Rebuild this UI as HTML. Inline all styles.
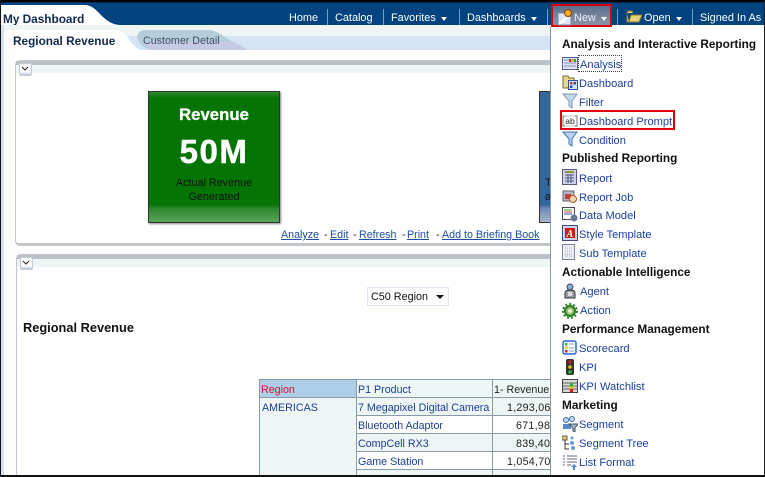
<!DOCTYPE html>
<html><head><meta charset="utf-8">
<style>
html,body{margin:0;padding:0;background:#fff}
#p{position:relative;width:765px;height:477px;overflow:hidden;background:#fff;font-family:"Liberation Sans",sans-serif;font-size:11px}
.a{position:absolute;white-space:nowrap}
.nav{color:#fff;top:11px;font-size:10.9px;line-height:14px}
.sep{position:absolute;top:9px;width:1px;height:16px;background:#7d9dbd}
.arr{display:inline-block;border-left:3.5px solid transparent;border-right:3.5px solid transparent;border-top:4px solid #fff;margin-left:5px;vertical-align:0}
.h{position:absolute;left:562px;font-weight:bold;font-size:11.8px;color:#111;white-space:nowrap;line-height:14px}
.m{position:absolute;left:579px;color:#1a3f9c;font-size:11.1px;white-space:nowrap;line-height:14px}
.ic{position:absolute;left:562px;width:16px;height:16px}
.l{position:absolute;color:#1c4fa0;text-decoration:underline;white-space:nowrap;font-size:10.7px;top:228px;line-height:14px}
.d{position:absolute;top:228px;color:#333;font-size:11px;line-height:14px}
.c{position:absolute;height:19px;line-height:19px;box-sizing:border-box;border:1px solid #8a9ba8;white-space:nowrap;overflow:hidden;font-size:10.7px;padding:1px 2px 0 1px;color:#1c3f94}
.n{letter-spacing:.25px}
.btn{position:absolute;width:11px;height:11px;background:linear-gradient(#fff 70%,#b8c6dc);border:1px solid #c2ccd8;border-radius:2px}
</style></head><body>
<div id="p">
<!-- header -->
<div class="a" style="left:0;top:0;width:765px;height:25px;background:#00437f"></div>
<div class="a" style="left:0;top:0;width:765px;height:2px;background:#000"></div>
<div class="a" style="left:0;top:2px;width:765px;height:1px;background:#0a2d55"></div>
<svg class="a" style="left:0;top:4px" width="125" height="22"><path d="M1 1H85C98 1 102 20 120 21V22H1Z" fill="#fff"/></svg>
<div class="a" style="left:3px;top:12px;font-weight:bold;font-size:11.8px;color:#10294f;line-height:14px">My Dashboard</div>
<div class="a nav" style="left:289px">Home</div><div class="sep" style="left:327px"></div>
<div class="a nav" style="left:335px">Catalog</div><div class="sep" style="left:383px"></div>
<div class="a nav" style="left:391px">Favorites<span class="arr"></span></div><div class="sep" style="left:459px"></div>
<div class="a nav" style="left:467px">Dashboards<span class="arr"></span></div><div class="sep" style="left:547px"></div>
<div class="a" style="left:551px;top:4px;width:61px;height:23px;box-sizing:border-box;border:2px solid #e00010;background:linear-gradient(#5a6f8e,#7c869c 60%,#8a93a8)"></div>
<svg class="a" style="left:556px;top:8px" width="18" height="18"><path d="M2 5H11L15 9V17H2Z" fill="#dfe6f4" stroke="#7a8aa8"/><path d="M3 16L14 7" stroke="#fff" stroke-width="2"/><circle cx="12" cy="5" r="3.5" fill="#f0b020" stroke="#a03010"/></svg>
<div class="a nav" style="left:574px;color:#eef">New<span class="arr"></span></div>
<div class="sep" style="left:617px"></div>
<svg class="a" style="left:626px;top:10px" width="17" height="14"><path d="M1 3V12H13L16 5H5L3 12" fill="#e6d47c" stroke="#8a7a30"/><path d="M1 3L2 1H6L7 3" fill="#e6d47c" stroke="#8a7a30"/></svg>
<div class="a nav" style="left:644px">Open<span class="arr"></span></div><div class="sep" style="left:692px"></div>
<div class="a nav" style="left:700px">Signed In As</div>

<!-- tab band -->
<div class="a" style="left:1px;top:25px;width:550px;height:11px;background:#eef6f5"></div>
<div class="a" style="left:1px;top:36px;width:550px;height:14px;background:#d4e4f5"></div>
<div class="a" style="left:1px;top:50px;width:550px;height:4px;background:#eef6f5"></div>
<div class="a" style="left:1px;top:25px;width:3px;height:450px;background:#d4e4f5"></div>
<svg class="a" style="left:4px;top:30px" width="245" height="24"><path d="M0 24V4Q0 0 5 0H112C124 0 125 16 137 20V24Z" fill="#fff"/><path d="M133 7Q134 0 142 0H205C216 0 226 14 245 20H151C140 20 135 14 133 7Z" fill="#b4cdd8"/><path d="M140 12L146 20H245L230 12Z" fill="#c6cae4"/></svg>
<div class="a" style="left:13px;top:34px;font-weight:bold;font-size:11.8px;color:#12294f;line-height:14px">Regional Revenue</div>
<div class="a" style="left:143px;top:34px;font-size:10.7px;color:#45506a;line-height:14px">Customer Detail</div>
<div class="a" style="left:4px;top:50px;width:547px;height:425px;background:#fff"></div>

<!-- panel 1 -->
<div class="a" style="left:15px;top:60px;width:540px;height:186px;box-sizing:border-box;border:1px solid #c2c6d0;border-right:0;border-bottom:3px solid #c2c6ca;border-radius:5px 0 0 5px;background:#fff"></div>
<div class="a" style="left:16px;top:61px;width:535px;height:4px;background:#bcc0c8"></div>
<div class="a" style="left:16px;top:65px;width:535px;height:8px;background:#eef6f5"></div>
<div class="btn" style="left:19px;top:63px"></div>
<svg class="a" style="left:20px;top:65px" width="10" height="8"><path d="M2 2L5 5L8 2" fill="none" stroke="#222"/></svg>

<!-- revenue tile -->
<div class="a" style="left:148px;top:91px;width:132px;height:132px;box-sizing:border-box;border:1px solid #333;background:linear-gradient(#2f8a2f,#047404 6px,#047404 113px,#2a862a 116px,#5aa55a);box-shadow:1px 1px 2px #888"></div>
<div class="a" style="left:148px;top:105px;width:132px;text-align:center;color:#fff;font-weight:bold;font-size:16.8px;line-height:20px;-webkit-text-stroke:.3px #fff">Revenue</div>
<div class="a" style="left:148px;top:133px;width:132px;text-align:center;color:#fff;font-weight:bold;font-size:33px;letter-spacing:1.5px;line-height:38px;-webkit-text-stroke:.5px #fff">50M</div>
<div class="a" style="left:148px;top:176px;width:132px;text-align:center;color:#111;font-size:10.8px;line-height:14px">Actual Revenue<br>Generated</div>

<!-- blue tile -->
<div class="a" style="left:539px;top:91px;width:12px;height:132px;box-sizing:border-box;border:1px solid #333;border-right:0;background:linear-gradient(#336699,#336699 113px,#6a88b4 116px,#a8b4cc)"></div>
<div class="a" style="left:545px;top:176px;color:#111;font-size:10.8px;line-height:14px;width:6px;overflow:hidden">T<br>a</div>

<!-- links -->
<a class="l" style="left:281px">Analyze</a><span class="d" style="left:324px">-</span>
<a class="l" style="left:330px">Edit</a><span class="d" style="left:353px">-</span>
<a class="l" style="left:359px">Refresh</a><span class="d" style="left:402px">-</span>
<a class="l" style="left:407px">Print</a><span class="d" style="left:436px">-</span>
<a class="l" style="left:442px">Add to Briefing Book</a>

<!-- panel 2 -->
<div class="a" style="left:16px;top:254px;width:540px;height:230px;box-sizing:border-box;border:1px solid #c2c6d0;border-right:0;border-radius:5px 0 0 0;background:#fff"></div>
<div class="a" style="left:17px;top:255px;width:534px;height:4px;background:#bcc0c8"></div>
<div class="a" style="left:17px;top:259px;width:534px;height:8px;background:#eef6f5"></div>
<div class="btn" style="left:20px;top:257px"></div>
<svg class="a" style="left:21px;top:259px" width="10" height="8"><path d="M2 2L5 5L8 2" fill="none" stroke="#222"/></svg>

<!-- select -->
<div class="a" style="left:367px;top:287px;width:82px;height:19px;box-sizing:border-box;border:1px solid #dde6f0;background:#fff;font-size:10.8px;line-height:19px;padding-left:3px;color:#111">C50 Region</div>
<div class="a" style="left:436px;top:295px;border-left:4px solid transparent;border-right:4px solid transparent;border-top:4px solid #111"></div>

<div class="a" style="left:23px;top:320px;font-weight:bold;font-size:12.8px;color:#111;line-height:16px">Regional Revenue</div>

<!-- table -->
<div class="c" style="left:259px;top:379px;width:98px;background:#aecde6;color:#e01030">Region</div>
<div class="c" style="left:259px;top:397px;width:98px;height:90px;background:#eef6f5;padding-left:2px">AMERICAS</div>
<div class="c" style="left:356px;top:379px;width:137px;background:#eef6f5">P1 Product</div>
<div class="c" style="left:492px;top:379px;width:60px;background:#eef6f5;color:#222">1- Revenue</div>
<div class="c" style="left:356px;top:397px;width:137px;background:#eef6f5">7 Megapixel Digital Camera</div>
<div class="c n" style="left:492px;top:397px;width:60px;background:#eef6f5;color:#222;padding:1px 0 0 14px">1,293,067</div>
<div class="c" style="left:356px;top:415px;width:137px;background:#fff">Bluetooth Adaptor</div>
<div class="c n" style="left:492px;top:415px;width:60px;background:#fff;color:#222;padding:1px 0 0 23px">671,984</div>
<div class="c" style="left:356px;top:433px;width:137px;background:#eef6f5">CompCell RX3</div>
<div class="c n" style="left:492px;top:433px;width:60px;background:#eef6f5;color:#222;padding:1px 0 0 23px">839,403</div>
<div class="c" style="left:356px;top:451px;width:137px;background:#fff">Game Station</div>
<div class="c n" style="left:492px;top:451px;width:60px;background:#fff;color:#222;padding:1px 0 0 14px">1,054,704</div>
<div class="c" style="left:356px;top:469px;width:137px;background:#eef6f5">MegaPad 2000</div>
<div class="c n" style="left:492px;top:469px;width:60px;background:#eef6f5;color:#222;padding:1px 0 0 23px">988,123</div>

<!-- menu -->
<div class="a" style="left:550px;top:27px;width:214px;height:448px;background:#fff;border-left:1px solid #8a98a8"></div>
<div class="h" style="top:37px">Analysis and Interactive Reporting</div>
<div class="a" style="left:578px;top:55px;width:42px;height:15px;border:1px dotted #345"></div>
<div class="m" style="top:58px;left:580px">Analysis</div>
<div class="m" style="top:77px">Dashboard</div>
<div class="m" style="top:96px">Filter</div>
<div class="a" style="left:560px;top:110px;width:115px;height:20px;box-sizing:border-box;border:2px solid #e00010"></div>
<div class="m" style="top:115px">Dashboard Prompt</div>
<div class="m" style="top:134px">Condition</div>
<div class="h" style="top:151px">Published Reporting</div>
<div class="m" style="top:172px">Report</div>
<div class="m" style="top:191px">Report Job</div>
<div class="m" style="top:209px">Data Model</div>
<div class="m" style="top:228px">Style Template</div>
<div class="m" style="top:247px">Sub Template</div>
<div class="h" style="top:265px">Actionable Intelligence</div>
<div class="m" style="top:285px;left:580px">Agent</div>
<div class="m" style="top:304px;left:580px">Action</div>
<div class="h" style="top:322px">Performance Management</div>
<div class="m" style="top:342px">Scorecard</div>
<div class="m" style="top:361px">KPI</div>
<div class="m" style="top:380px">KPI Watchlist</div>
<div class="h" style="top:398px">Marketing</div>
<div class="m" style="top:418px">Segment</div>
<div class="m" style="top:437px">Segment Tree</div>
<div class="m" style="top:456px">List Format</div>

<!-- menu icons -->
<svg class="ic" style="top:56px" viewBox="0 0 16 16"><rect x=".5" y="1.500" width="15" height="12" fill="#dde2f4" stroke="#565f9a"/><path d="M2 4H14M2 7H14M2 10H14" stroke="#8890c0"/><path d="M8 3V6" stroke="#d03030" stroke-width="2"/><path d="M10.500 3V6" stroke="#e0b020" stroke-width="2"/><path d="M13 3V6" stroke="#30a030" stroke-width="2"/></svg>
<svg class="ic" style="top:74px" viewBox="0 0 16 16"><path d="M1 2H6L7 4H12V14H1Z" fill="#e8d88a" stroke="#7a6a30"/><rect x="6.500" y="6.500" width="9" height="9" fill="#d8e4f8" stroke="#2850a8"/><rect x="8" y="8" width="2.500" height="2.500" fill="#d03030"/><rect x="11.500" y="8" width="2.500" height="2.500" fill="#2850a8"/><rect x="8" y="11.500" width="2.500" height="2.500" fill="#2850a8"/></svg>
<svg class="ic" style="top:93px" viewBox="0 0 16 16"><path d="M1 1H15L10 8V15L7 13V8Z" fill="#c4d6ec" stroke="#7a98b8"/></svg>
<svg class="ic" style="top:113px" viewBox="0 0 16 16"><path d="M3 3H1V13H3M13 3H15V13H13" fill="none" stroke="#444"/><rect x="1" y="3" width="14" height="10" fill="none" stroke="#999" stroke-width=".6"/><text x="8" y="11" font-size="8.500" text-anchor="middle" font-family="Liberation Sans" fill="#222">ab</text></svg>
<svg class="ic" style="top:131px" viewBox="0 0 16 16"><path d="M1 1H15L10 8V15L7 13V8Z" fill="#b8d0ec" stroke="#3a7ab8"/></svg>
<svg class="ic" style="top:169px" viewBox="0 0 16 16"><rect x=".5" y=".5" width="14" height="15" fill="#cfd2ea" stroke="#555a80"/><path d="M3 6H12M3 9H12M3 12H12M6 5V14M9 5V14" stroke="#555a80"/><path d="M3 3H12" stroke="#8a9a30" stroke-width="2"/></svg>
<svg class="ic" style="top:189px" viewBox="0 0 16 16"><rect x="1" y="2" width="11" height="10" fill="#b0b4c8" stroke="#666"/><rect x="3" y="5" width="6" height="5" fill="#c04040"/><circle cx="11" cy="10" r="3.500" fill="#f0d8c0" stroke="#c05020"/></svg>
<svg class="ic" style="top:206px" viewBox="0 0 16 16"><rect x=".5" y="1.500" width="12" height="12" fill="#fff" stroke="#445"/><path d="M2 4H10" stroke="#30a030"/><path d="M2 6H10" stroke="#d04030"/><path d="M2 8H10" stroke="#3050c0"/><ellipse cx="12" cy="12" rx="3.500" ry="3.500" fill="#6a7898"/></svg>
<svg class="ic" style="top:225px" viewBox="0 0 16 16"><rect x=".5" y=".5" width="15" height="15" fill="#ced2e8" stroke="#444a80"/><rect x="3" y="3" width="10" height="10" fill="#c81e10"/><text x="8" y="12" font-size="10" font-weight="bold" font-style="italic" text-anchor="middle" font-family="Liberation Serif" fill="#fff">A</text></svg>
<svg class="ic" style="top:244px" viewBox="0 0 16 16"><rect x=".5" y=".5" width="12" height="15" fill="#eef0f8" stroke="#7a80a0"/><path d="M3 4H10M3 7H10M3 10H10M3 12H10" stroke="#9aa0c0" stroke-dasharray="1 1"/></svg>
<svg class="ic" style="top:283px" viewBox="0 0 16 16"><circle cx="8" cy="4" r="3" fill="#8ab0d8" stroke="#445"/><path d="M3 15V10Q3 7 8 7T13 10V15Z" fill="#9aa0a8" stroke="#333"/><rect x="6" y="9" width="4" height="4" fill="#ddd"/></svg>
<svg class="ic" style="top:303px" viewBox="0 0 16 16"><circle cx="8" cy="8" r="5" fill="#90c070" stroke="#2a7a20" stroke-width="2"/><circle cx="8" cy="8" r="7" fill="none" stroke="#2a8a20" stroke-width="2" stroke-dasharray="2 2"/><circle cx="8" cy="8" r="2" fill="#e8f0d0"/></svg>
<svg class="ic" style="top:340px" viewBox="0 0 16 16"><rect x="1" y="1" width="13" height="13" rx="2" fill="#f4f8ff" stroke="#2a68c8" stroke-width="1.500"/><rect x="3" y="3" width="2.500" height="2.500" fill="#50b030"/><rect x="3" y="6.500" width="2.500" height="2.500" fill="#e8c020"/><rect x="3" y="10" width="2.500" height="2.500" fill="#d02020"/><path d="M7 4H12M7 8H12M7 11H12" stroke="#8aa8c8"/></svg>
<svg class="ic" style="top:359px" viewBox="0 0 16 16"><rect x="4" y="0" width="8" height="16" rx="2" fill="#333"/><circle cx="8" cy="3" r="1.800" fill="#c02020"/><circle cx="8" cy="8" r="1.800" fill="#e0c020"/><circle cx="8" cy="13" r="1.800" fill="#30b030"/></svg>
<svg class="ic" style="top:378px" viewBox="0 0 16 16"><rect x=".5" y="1.500" width="15" height="13" fill="#d8d8d8" stroke="#444"/><path d="M1 5H15M1 8H15M1 11H15" stroke="#666"/><rect x="8" y="5" width="3" height="3" fill="#40a040"/><rect x="8" y="8" width="3" height="3" fill="#e0b020"/><rect x="8" y="11" width="3" height="3" fill="#d02020"/></svg>
<svg class="ic" style="top:416px" viewBox="0 0 16 16"><circle cx="4" cy="4" r="2.500" fill="#c8d8f0" stroke="#3a68b0"/><circle cx="10" cy="3" r="2.500" fill="#c8d8f0" stroke="#3a68b0"/><path d="M1 13V8H9V13Z" fill="#5a88d0"/><path d="M7 8H16L13 12V16L11 15V12Z" fill="#a0b8d0" stroke="#456"/></svg>
<svg class="ic" style="top:435px" viewBox="0 0 16 16"><rect x="0" y="1" width="5" height="4" fill="#d8c860" stroke="#665"/><path d="M3 5V14H7M3 9H7" stroke="#333" fill="none"/><circle cx="10" cy="3" r="1.500" fill="#6a98d8"/><circle cx="10" cy="8" r="2" fill="#6a98d8"/><circle cx="11" cy="13" r="2" fill="#6a98d8"/></svg>
<svg class="ic" style="top:454px" viewBox="0 0 16 16"><path d="M5 2H15M5 5H15M5 8H15M5 11H9M1 2H3M1 5H3M1 8H3M1 11H3" stroke="#667"/><path d="M9 13L12 10L15 13H13V16H11V13Z" fill="#4a88d8"/></svg>

<!-- outer frame -->
<div class="a" style="left:0;top:0;width:1px;height:477px;background:#111"></div>
<div class="a" style="left:764px;top:0;width:1px;height:477px;background:#222"></div>
<div class="a" style="left:0;top:475px;width:765px;height:2px;background:#111"></div>
</div>
</body></html>
